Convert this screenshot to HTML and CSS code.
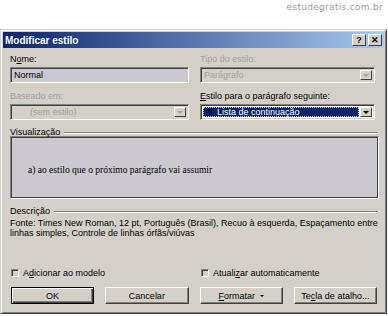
FILE: index.html
```html
<!DOCTYPE html>
<html lang="pt-BR">

<head>
    <meta charset="UTF-8">
    <title>Modificar estilo</title>
    <link rel="stylesheet" href="styles.css">
</head>

<body>
    <div class="site">estudegratis.com.br</div>
    <div class="dialog">
        <div class="titlebar">
            <span class="title">Modificar estilo</span>
            <div class="tbtns">
                <span class="tbtn">?</span>
                <span class="tbtn">&#10005;</span>
            </div>
        </div>
        <div class="content">
            <div class="fields">
                <div class="field">
                    <label>N<u>o</u>me:</label>
                    <div class="edit">Normal</div>
                </div>
                <div class="field disabled">
                    <label>Tipo do estilo:</label>
                    <div class="combo"><span class="val">Parágrafo</span><span class="drop"><i class="arrow"></i></span></div>
                </div>
                <div class="field disabled">
                    <label>Baseado em:</label>
                    <div class="combo"><span class="val indent">(sem estilo)</span><span class="drop"><i class="arrow"></i></span></div>
                </div>
                <div class="field">
                    <label><u>E</u>stilo para o parágrafo seguinte:</label>
                    <div class="combo active"><span class="val"><b class="pil">&para;</b>Lista de continuação</span><span class="drop"><i class="arrow"></i></span></div>
                </div>
            </div>

            <div class="legend"><span>Visualização</span></div>
            <div class="preview">
                <p>a) ao estilo que o próximo parágrafo vai assumir</p>
            </div>

            <div class="legend desc-legend"><span>Descrição</span></div>
            <p class="desc">Fonte: Times New Roman, 12 pt, Português (Brasil), Recuo à esquerda, Espaçamento entre linhas simples, Controle de linhas órfãs/viúvas</p>

            <div class="checks">
                <label class="check"><span class="box"></span><span>A<u>d</u>icionar ao modelo</span></label>
                <label class="check"><span class="box"></span><span>Atuali<u>z</u>ar automaticamente</span></label>
            </div>

            <div class="buttons">
                <button class="btn default">OK</button>
                <button class="btn">Cancelar</button>
                <button class="btn"><u>F</u>ormatar <span class="small-arrow"></span></button>
                <button class="btn">Te<u>c</u>la de atalho...</button>
            </div>
        </div>
    </div>
</body>

</html>
```

FILE: styles.css
```css
/* Base */
body {
    margin: 0;
    background: #fff;
    font-family: "Liberation Sans", Arial, sans-serif;
    font-size: 9px;
    color: #000;
}

.site {
    height: 29px;
    box-sizing: border-box;
    padding: 2px 5px 0 0;
    text-align: right;
    font-family: "DejaVu Sans", sans-serif;
    font-size: 9px;
    letter-spacing: 0.3px;
    color: #9a9a9a;
}

/* Window */
.dialog {
    width: 387px;
    height: 285px;
    box-sizing: border-box;
    background: #d4d0c8;
    border: 1px solid;
    border-color: #d4d0c8 #404040 #404040 #d4d0c8;
    box-shadow: inset 1px 1px 0 #fff, inset -1px -1px 0 #808080;
    padding: 2px;
}

.titlebar {
    height: 16px;
    display: flex;
    align-items: center;
    justify-content: space-between;
    background: linear-gradient(to right, #0a246a, #a6caf0);
    padding: 0 2px 0 2px;
}

.title {
    color: #fff;
    font-weight: bold;
    font-size: 10px;
}

.tbtns {
    display: flex;
    gap: 2px;
}

.tbtn {
    width: 14px;
    height: 12px;
    box-sizing: border-box;
    background: #d4d0c8;
    border: 1px solid;
    border-color: #fff #404040 #404040 #fff;
    font-size: 9px;
    font-weight: bold;
    line-height: 10px;
    text-align: center;
}

.content {
    padding: 6px 7px 0 7px;
}

/* Top fields */
.fields {
    display: grid;
    grid-template-columns: 179px 175px;
    column-gap: 11px;
    row-gap: 8px;
}

.field label {
    display: block;
    height: 11px;
    line-height: 11px;
    margin-bottom: 2px;
}

.field.disabled label {
    color: #a0a0a0;
}

.edit,
.combo {
    height: 16px;
    box-sizing: border-box;
    border: 1px solid;
    border-color: #808080 #fff #fff #808080;
    box-shadow: inset 1px 1px 0 #404040, inset -1px -1px 0 #d4d0c8;
    line-height: 14px;
    padding-left: 3px;
}

.edit {
    background: #cac9d1;
}

.combo {
    display: flex;
    justify-content: space-between;
    padding: 2px;
    background: #d4d0c8;
}

.combo .val {
    line-height: 10px;
    padding-left: 1px;
    flex: 1;
}

.disabled .combo .val {
    color: #a0a0a0;
}

.combo .val.indent {
    padding-left: 17px;
}

.combo.active {
    background: #fff;
}

.combo.active .val {
    background: #0a246a;
    color: #fff;
    outline: 1px dotted #d4d0c8;
    outline-offset: -1px;
    padding-left: 14px;
    position: relative;
    margin-right: 1px;
}

.pil {
    position: absolute;
    left: 5px;
    top: 0;
    color: #000;
    font-size: 8px;
}

.drop {
    width: 12px;
    height: 10px;
    box-sizing: border-box;
    background: #d4d0c8;
    border: 1px solid;
    border-color: #fff #404040 #404040 #fff;
    display: flex;
    align-items: center;
    justify-content: center;
}

.arrow {
    width: 0;
    height: 0;
    border-left: 3px solid transparent;
    border-right: 3px solid transparent;
    border-top: 3px solid #000;
}

.disabled .arrow {
    border-top-color: #a0a0a0;
}

/* Groups */
.legend {
    display: flex;
    align-items: center;
    gap: 4px;
    margin-top: 7px;
    height: 11px;
    line-height: 11px;
}

.legend::after {
    content: "";
    flex: 1;
    height: 0;
    border-top: 1px solid #808080;
    border-bottom: 1px solid #fff;
}

.preview {
    height: 63px;
    width: 369px;
    box-sizing: border-box;
    margin-top: -2px;
    background: #cbc9cf;
    border: 1px solid;
    border-color: #808080 #fff #fff #808080;
    box-shadow: inset 1px 1px 0 #404040, inset -1px -1px 0 #404040;
    display: flex;
    align-items: center;
    padding-left: 17px;
}

.preview p {
    margin: 4px 0 0 0;
    font-family: "Liberation Serif", "Times New Roman", serif;
    font-size: 9.5px;
}

.desc-legend {
    margin-top: 7px;
}

.desc {
    margin: 1px 0 0 0;
    line-height: 10px;
    width: 374px;
}

/* Checks */
.checks {
    display: grid;
    grid-template-columns: 190px 1fr;
    margin-top: 29px;
    padding-left: 1px;
}

.check {
    display: flex;
    align-items: center;
    gap: 4px;
    height: 11px;
}

.box {
    width: 8px;
    height: 8px;
    box-sizing: border-box;
    background: #d4d0c8;
    border: 1px solid;
    border-color: #808080 #fff #fff #808080;
    box-shadow: inset 1px 1px 0 #404040;
}

/* Buttons */
.buttons {
    display: flex;
    gap: 11px;
    margin-top: 9px;
    padding-left: 1px;
}

.btn {
    width: 85px;
    height: 17px;
    box-sizing: border-box;
    padding: 0;
    font-family: "Liberation Sans", Arial, sans-serif;
    font-size: 9px;
    color: #000;
    background: #d4d0c8;
    border: 1px solid;
    border-color: #fff #404040 #404040 #fff;
    box-shadow: inset -1px -1px 0 #808080;
}

.btn.default {
    border: 1px solid #000;
    box-shadow: inset 1px 1px 0 #fff, inset -1px -1px 0 #404040, inset -2px -2px 0 #808080;
}

.small-arrow {
    display: inline-block;
    vertical-align: middle;
    margin-left: 2px;
    border-left: 2px solid transparent;
    border-right: 2px solid transparent;
    border-top: 2px solid #000;
}
```
